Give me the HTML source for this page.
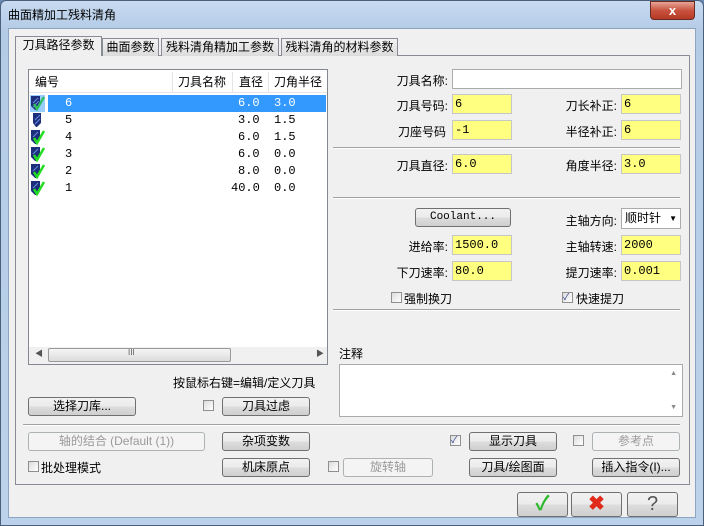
<!DOCTYPE html><html><head><meta charset="utf-8"><style>
*{box-sizing:border-box;margin:0;padding:0}
body{width:704px;height:526px;overflow:hidden;background:#6b8db5;font-family:"Liberation Sans","Noto Sans CJK SC",sans-serif;font-size:12px;color:#000;position:relative}
.a{position:absolute}
.frame{left:0;top:0;width:704px;height:526px;background:linear-gradient(#c7daf0,#b4cbe6 30px,#bcd2ea);border:1px solid #4a5f7a;border-radius:6px 6px 0 0}
.body{left:8px;top:28px;width:688px;height:490px;background:#f0f0f0;border:1px solid #8ca4c2}
.btn{position:absolute;height:19px;border:1px solid #707070;border-radius:3px;background:linear-gradient(#f2f2f2,#ebebeb 50%,#dddddd 51%,#cfcfcf);text-align:center;line-height:17px;font-size:12px}
.dis{color:#9a9a9a;border-color:#adb2b5;background:#f4f4f4}
.cb{position:absolute;width:11px;height:11px;border:1px solid #8f8f8f;background:linear-gradient(135deg,#dcdcdc,#fff)}
.in{position:absolute;height:20px;border:1px solid #c6c6c6;background:#ffff80;padding-left:2px;line-height:18px;font-family:"Liberation Mono",monospace;font-size:12px}
.lb{position:absolute;text-align:right;font-size:12px}
.sep{position:absolute;height:2px;border-top:1px solid #a0a0a0;border-bottom:1px solid #fff}
.tab{position:absolute;height:18px;border:1px solid #898c95;border-bottom:none;background:linear-gradient(#f2f2f2,#dcdcdc);text-align:center;line-height:17px}
.row{position:absolute;left:0;width:296px;height:17px;font-family:"Liberation Mono",monospace;font-size:12px;line-height:17px}
.row span{position:absolute}
.row svg{position:absolute;left:1px;top:0}
</style></head><body>
<div class="a frame"></div>
<div class="a" style="left:8px;top:6px;font-size:12px">曲面精加工残料清角</div>
<div class="a" style="left:650px;top:1px;width:45px;height:19px;border:1px solid #6b2a22;border-radius:0 0 4px 4px;background:linear-gradient(#e8a597,#c8523e 50%,#b63a26);color:#fff;text-align:center;font-weight:bold;line-height:18px;font-size:13px">x</div>
<div class="a body"></div>
<div class="a" style="left:15px;top:55px;width:675px;height:430px;border:1px solid #898c95;background:#f0f0f0"></div>
<div class="tab" style="left:15px;top:36px;width:87px;height:20px;background:#f0f0f0;border-color:#898c95;z-index:2">刀具路径参数</div>
<div class="tab" style="left:102px;top:38px;width:57px">曲面参数</div>
<div class="tab" style="left:161px;top:38px;width:118px">残料清角精加工参数</div>
<div class="tab" style="left:281px;top:38px;width:117px">残料清角的材料参数</div>
<!-- list -->
<div class="a" style="left:28px;top:69px;width:300px;height:296px;border:1px solid #828790;background:#fff">
<div class="a" style="left:0;top:0;width:298px;height:23px;background:#fff;border-bottom:1px solid #e5e5e5;line-height:24px">
<span class="a" style="left:6px">编号</span><span class="a" style="left:149px">刀具名称</span><span class="a" style="left:210px">直径</span><span class="a" style="left:245px">刀角半径</span>
<div class="a" style="left:143px;top:2px;width:1px;height:20px;background:#e5e5e5"></div><div class="a" style="left:203px;top:2px;width:1px;height:20px;background:#e5e5e5"></div><div class="a" style="left:239px;top:2px;width:1px;height:20px;background:#e5e5e5"></div></div>
<div class="a" style="left:19px;top:25px;width:278px;height:17px;background:#3399ff"></div>
<div class="a" style="left:1px;top:25px;width:15px;height:17px;background:#99ccff"></div>
<div class="row" style="top:25px;color:#fff"><svg width="16" height="17"><path d="M1 1h9v10l-4 4h-1l-4-4z" fill="#1c2f7a"/><path d="M3 8l5-5M3 12l6-6" stroke="#6a8ae0" stroke-width="1"/><path d="M4 9l3 5 7-12" stroke="#30c060" stroke-width="2.5" fill="none"/></svg><span style="left:36px">6</span><span style="left:209px">6.0</span><span style="left:245px">3.0</span></div>
<div class="row" style="top:42px"><svg width="16" height="17"><path d="M3 1h8v10l-4 4h-1l-3-4z" fill="#1c2f7a"/><path d="M5 8l5-5M5 12l5-5" stroke="#6a8ae0" stroke-width="1"/></svg><span style="left:36px">5</span><span style="left:209px">3.0</span><span style="left:245px">1.5</span></div>
<div class="row" style="top:59px"><svg width="16" height="17"><path d="M1 1h9v10l-4 4h-1l-4-4z" fill="#1c2f7a"/><path d="M3 8l5-5" stroke="#6a8ae0"/><path d="M4 9l3 5 7-12" stroke="#22dd22" stroke-width="2.5" fill="none"/></svg><span style="left:36px">4</span><span style="left:209px">6.0</span><span style="left:245px">1.5</span></div>
<div class="row" style="top:76px"><svg width="16" height="17"><path d="M1 1h9v10l-4 4h-1l-4-4z" fill="#1c2f7a"/><path d="M3 8l5-5" stroke="#6a8ae0"/><path d="M4 9l3 5 7-12" stroke="#22dd22" stroke-width="2.5" fill="none"/></svg><span style="left:36px">3</span><span style="left:209px">6.0</span><span style="left:245px">0.0</span></div>
<div class="row" style="top:93px"><svg width="16" height="17"><path d="M1 1h9v10l-4 4h-1l-4-4z" fill="#1c2f7a"/><path d="M3 8l5-5" stroke="#6a8ae0"/><path d="M4 9l3 5 7-12" stroke="#22dd22" stroke-width="2.5" fill="none"/></svg><span style="left:36px">2</span><span style="left:209px">8.0</span><span style="left:245px">0.0</span></div>
<div class="row" style="top:110px"><svg width="16" height="17"><path d="M1 1h9v10l-4 4h-1l-4-4z" fill="#1c2f7a"/><path d="M3 8l5-5" stroke="#6a8ae0"/><path d="M4 9l3 5 7-12" stroke="#22dd22" stroke-width="2.5" fill="none"/></svg><span style="left:36px">1</span><span style="left:202px">40.0</span><span style="left:245px">0.0</span></div>
<div class="a" style="left:0;top:277px;width:298px;height:17px;background:#f0f0f0"><span class="a" style="left:6px;top:1px;font-size:8px;color:#555">◀</span><div class="a" style="left:19px;top:1px;width:183px;height:14px;border:1px solid #9a9a9a;border-radius:2px;background:linear-gradient(#f5f5f5,#dcdcdc)"></div><span class="a" style="left:99px;top:1px;font-size:8px;color:#555">III</span><span class="a" style="left:287px;top:1px;font-size:8px;color:#555">▶</span></div>
</div>
<!-- right -->
<div class="lb" style="left:360px;top:72px;width:88px">刀具名称:</div>
<div class="in" style="left:452px;top:69px;width:230px;background:#fff;border-color:#ababab"></div>
<div class="lb" style="left:360px;top:97px;width:88px">刀具号码:</div><div class="in" style="left:452px;top:94px;width:60px">6</div>
<div class="lb" style="left:520px;top:97px;width:97px">刀长补正:</div><div class="in" style="left:621px;top:94px;width:60px">6</div>
<div class="lb" style="left:360px;top:123px;width:86px">刀座号码</div><div class="in" style="left:452px;top:120px;width:60px">-1</div>
<div class="lb" style="left:520px;top:123px;width:97px">半径补正:</div><div class="in" style="left:621px;top:120px;width:60px">6</div>
<div class="sep" style="left:333px;top:147px;width:347px"></div>
<div class="lb" style="left:360px;top:157px;width:88px">刀具直径:</div><div class="in" style="left:452px;top:154px;width:60px">6.0</div>
<div class="lb" style="left:520px;top:157px;width:97px">角度半径:</div><div class="in" style="left:621px;top:154px;width:60px">3.0</div>
<div class="sep" style="left:333px;top:197px;width:347px"></div>
<div class="btn" style="left:415px;top:208px;width:96px;font-family:'Liberation Mono',monospace;font-size:11px">Coolant...</div>
<div class="lb" style="left:520px;top:212px;width:97px">主轴方向:</div>
<div class="a" style="left:621px;top:208px;width:60px;height:21px;border:1px solid #ababab;background:#fff;line-height:19px;padding-left:3px">顺时针 <span style="font-size:8px;position:absolute;right:3px">▼</span></div>
<div class="lb" style="left:360px;top:238px;width:88px">进给率:</div><div class="in" style="left:452px;top:235px;width:60px">1500.0</div>
<div class="lb" style="left:520px;top:238px;width:97px">主轴转速:</div><div class="in" style="left:621px;top:235px;width:60px">2000</div>
<div class="lb" style="left:360px;top:264px;width:88px">下刀速率:</div><div class="in" style="left:452px;top:261px;width:60px">80.0</div>
<div class="lb" style="left:520px;top:264px;width:97px">提刀速率:</div><div class="in" style="left:621px;top:261px;width:60px">0.001</div>
<div class="cb" style="left:391px;top:292px"></div><div class="a" style="left:404px;top:290px">强制换刀</div>
<div class="cb" style="left:562px;top:292px;font-size:9px;line-height:9px;color:#2a3f8a">✓</div><div class="a" style="left:576px;top:290px">快速提刀</div>
<div class="sep" style="left:333px;top:309px;width:347px"></div>
<div class="a" style="left:339px;top:345px">注释</div>
<div class="a" style="left:339px;top:364px;width:344px;height:53px;border:1px solid #ababab;background:#fff"><span class="a" style="right:5px;top:5px;font-size:7px;color:#888">▲</span><span class="a" style="right:5px;bottom:5px;font-size:7px;color:#888">▼</span></div>
<!-- bottom -->
<div class="a" style="left:173px;top:374px">按鼠标右键=编辑/定义刀具</div>
<div class="btn" style="left:28px;top:397px;width:108px">选择刀库...</div>
<div class="cb" style="left:203px;top:400px"></div>
<div class="btn" style="left:222px;top:397px;width:88px">刀具过虑</div>
<div class="sep" style="left:23px;top:424px;width:657px"></div>
<div class="btn dis" style="left:28px;top:432px;width:177px">轴的结合 (Default (1))</div>
<div class="btn" style="left:222px;top:432px;width:88px">杂项变数</div>
<div class="cb" style="left:450px;top:435px;font-size:9px;line-height:9px;color:#2a3f8a">✓</div>
<div class="btn" style="left:469px;top:432px;width:88px">显示刀具</div>
<div class="cb" style="left:573px;top:435px"></div>
<div class="btn dis" style="left:592px;top:432px;width:88px">参考点</div>
<div class="cb" style="left:28px;top:461px"></div><div class="a" style="left:41px;top:459px">批处理模式</div>
<div class="btn" style="left:222px;top:458px;width:88px">机床原点</div>
<div class="cb" style="left:328px;top:461px"></div>
<div class="btn dis" style="left:343px;top:458px;width:90px">旋转轴</div>
<div class="btn" style="left:469px;top:458px;width:88px">刀具/绘图面</div>
<div class="btn" style="left:592px;top:458px;width:88px">插入指令(I)...</div>
<div class="btn" style="left:517px;top:492px;width:51px;height:25px;color:#2cb82c;font-size:20px;line-height:22px;font-weight:bold">✓</div>
<div class="btn" style="left:571px;top:492px;width:51px;height:25px;color:#e02a1a;font-size:20px;line-height:22px;font-weight:bold">✖</div>
<div class="btn" style="left:627px;top:492px;width:51px;height:25px;color:#555;font-size:20px;line-height:22px">?</div>
</body></html>
